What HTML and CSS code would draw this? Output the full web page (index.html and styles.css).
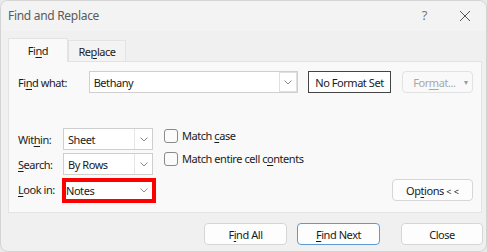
FILE: index.html
```html
<!DOCTYPE html>
<html>
<head>
<meta charset="utf-8">
<link rel="stylesheet" href="styles.css">
</head>
<body>
<div class="dialog">
  <div class="titlebar">
    <span class="title">Find and Replace</span>
    <span class="tb-icons">
      <span class="help">?</span>
      <svg class="close-x" width="12" height="12" viewBox="0 0 12 12"><path d="M1 1L11 11M11 1L1 11" stroke="#555" stroke-width="1" fill="none"/></svg>
    </span>
  </div>
  <div class="tabs">
    <div class="tab active"><span>Fi<u>n</u>d</span></div>
    <div class="tab"><span>Re<u>p</u>lace</span></div>
  </div>
  <div class="panel">
    <div class="find-row">
      <span class="label">Fi<u>n</u>d what:</span>
      <div class="combo wide">
        <span class="val">Bethany</span>
        <span class="drop"><svg width="8" height="5" viewBox="0 0 8 5"><path d="M0.5 0.5L4 4L7.5 0.5" stroke="#888" fill="none"/></svg></span>
      </div>
      <div class="fmt-set"><span>No Format Set</span></div>
      <div class="btn disabled fmt"><span>For<u>m</u>at...</span><span class="tri">▾</span></div>
    </div>
    <div class="options">
      <div class="opt-grid">
        <span class="label">Wit<u>h</u>in:</span>
        <div class="combo sel"><span class="val">Sheet</span><span class="drop sep"><svg width="8" height="5" viewBox="0 0 8 5"><path d="M0.5 0.5L4 4L7.5 0.5" stroke="#888" fill="none"/></svg></span></div>
        <span class="label"><u>S</u>earch:</span>
        <div class="combo sel"><span class="val">By Rows</span><span class="drop sep"><svg width="8" height="5" viewBox="0 0 8 5"><path d="M0.5 0.5L4 4L7.5 0.5" stroke="#888" fill="none"/></svg></span></div>
        <span class="label"><u>L</u>ook in:</span>
        <div class="combo sel marked"><span class="val">Notes</span><span class="drop"><svg width="8" height="5" viewBox="0 0 8 5"><path d="M0.5 0.5L4 4L7.5 0.5" stroke="#888" fill="none"/></svg></span></div>
      </div>
      <div class="checks">
        <label class="chk"><span class="box"></span><span>Match <u>c</u>ase</span></label>
        <label class="chk"><span class="box"></span><span>Match entire cell c<u>o</u>ntents</span></label>
      </div>
      <div class="opt-btn-wrap">
        <div class="btn opt-btn"><span>Op<u>t</u>ions <span class="lt">&lt; &lt;</span></span></div>
      </div>
    </div>
  </div>
  <div class="footer">
    <div class="btn fb"><span>F<u>i</u>nd All</span></div>
    <div class="btn fb default"><span><u>F</u>ind Next</span></div>
    <div class="btn fb close"><span>Close</span></div>
  </div>
</div>
</body>
</html>
```
FILE: styles.css
```css
* { box-sizing: border-box; }
html, body { margin: 0; padding: 0; background: #e9e9e9; }
body {
  font-family: "Noto Sans", "Open Sans", sans-serif;
  font-size: 11px;
  letter-spacing: -0.45px;
  color: #1b1b1b;
}
u { text-decoration-thickness: 1px; text-underline-offset: 2px; }
.dialog {
  width: 487px;
  height: 252px;
  background: #f0f0f0;
  border: 1px solid #d4d4d4;
  border-radius: 8px;
  overflow: hidden;
  display: flex;
  flex-direction: column;
}
.titlebar {
  height: 30px;
  flex: none;
  background: #f3f3f3;
  display: flex;
  align-items: center;
  justify-content: space-between;
  padding: 0 15px 0 7px;
}
.title { font-size: 12px; letter-spacing: -0.3px; color: #5a5a5a; margin-top: -2px; }
.tb-icons { display: flex; align-items: center; gap: 32px; }
.help { color: #777; font-size: 13px; margin-top: -2px; }
.close-x { margin-top: -1px; }
.tabs {
  display: flex;
  padding-left: 7px;
  margin-top: 7px;
  height: 23px;
  align-items: flex-end;
  flex: none;
}
.tab {
  height: 21px;
  width: 58px;
  display: flex;
  align-items: center;
  justify-content: center;
  background: #f3f3f3;
  border: 1px solid #e3e3e3;
  border-bottom: none;
}
.tab.active {
  height: 24px;
  width: 60px;
  background: #f9f9f9;
  margin-bottom: -1px;
  position: relative;
  z-index: 1;
  padding-bottom: 1px;
}
.panel {
  margin: 0 4px 0 7px;
  height: 152px;
  flex: none;
  background: #f9f9f9;
  border: 1px solid #e3e3e3;
  padding: 9px 8px 0 9px;
  display: flex;
  flex-direction: column;
}
.find-row {
  display: flex;
  align-items: center;
  height: 22px;
}
.find-row .label { width: 71px; }
.combo {
  background: #fff;
  border: 1px solid #cfcfcf;
  height: 22px;
  display: flex;
  align-items: center;
  justify-content: space-between;
}
.combo .val { padding-left: 4px; }
.combo.wide { width: 210px; }
.drop {
  width: 18px;
  height: 20px;
  display: flex;
  align-items: center;
  justify-content: center;
  border-left: 1px solid #e6e6e6;
}
.combo.wide .drop { border: 1px solid #e0e0e0; height: 20px; }
.fmt-set {
  margin-left: 10px;
  width: 84px;
  height: 22px;
  border: 1px solid #444;
  background: #fff;
  display: flex;
  align-items: center;
  justify-content: center;
}
.btn {
  background: #fdfdfd;
  border: 1px solid #d6d6d6;
  border-radius: 4px;
  height: 22px;
  display: flex;
  align-items: center;
  justify-content: center;
}
.btn.disabled { color: #a8a8a8; border-color: #e2e2e2; background: #f9f9f9; }
.fmt { margin-left: 11px; width: 71px; justify-content: space-between; padding: 0 4px 0 10px; }
.tri { font-size: 8px; color: #999; margin-top: -2px; }
.options {
  margin-top: 35px;
  display: flex;
  align-items: flex-start;
}
.opt-grid {
  display: grid;
  grid-template-columns: 45px 90px;
  grid-auto-rows: 22px;
  row-gap: 3px;
  align-items: center;
}
.combo.sel { width: 90px; }
.combo.sel .drop { height: 20px; }
.combo.marked {
  width: 94px;
  height: 25px;
  margin-left: -1px;
  border: 4px solid #fe0000;
  align-self: start;
}
.combo.marked .val { padding-left: 0; }
.combo.marked .drop { border-left: none; height: 17px; width: 16px; }
.checks {
  margin-left: 11px;
  display: flex;
  flex-direction: column;
  gap: 8px;
}
.chk { display: flex; align-items: center; gap: 4px; height: 15px; }
.box {
  width: 14px;
  height: 14px;
  border: 1px solid #8a8a8a;
  border-radius: 3px;
  background: #fbfbfb;
}
.opt-btn-wrap {
  margin-left: auto;
  display: flex;
  align-items: flex-end;
  height: 73px;
}
.opt-btn { width: 81px; }
.lt { font-size: 9px; letter-spacing: 0; }
.footer {
  display: flex;
  justify-content: flex-end;
  padding: 10px 3px 0 0;
  gap: 10px;
}
.fb { width: 83px; }
.fb.default { border-color: #5c9ad6; }
.fb.close { margin-left: 11px; width: 82px; }
```
